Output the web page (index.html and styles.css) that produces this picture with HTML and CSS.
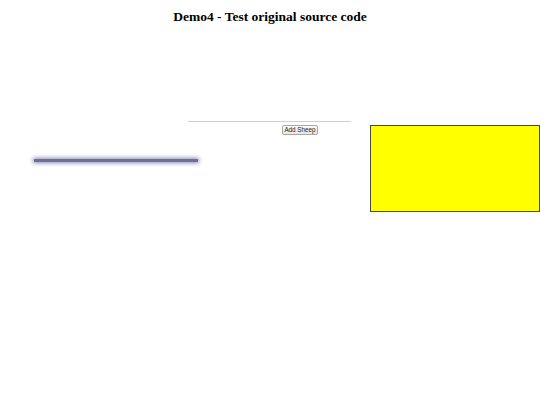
FILE: index.html
```html
<!DOCTYPE html>
<html>
<head>
<meta charset="utf-8">
<title>Demo4</title>
<link rel="stylesheet" href="styles.css">
</head>
<body>
<h1 class="title">Demo4 - Test original source code</h1>
<div class="stage">
  <div class="left">
    <div class="rule"></div>
    <button class="btn">Add Sheep</button>
    <div class="bar"></div>
  </div>
  <div class="box"></div>
</div>
</body>
</html>
```
FILE: styles.css
```css
html, body {
  margin: 0;
  padding: 0;
  background: #fff;
}
.title {
  margin: 8px 0 0 0;
  font-family: "Liberation Serif", serif;
  font-size: 13.5px;
  line-height: 18px;
  font-weight: bold;
  text-align: center;
  color: #000;
}
.stage {
  display: flex;
  margin-top: 95px;
}
.left {
  width: 370px;
  display: flex;
  flex-direction: column;
  align-items: flex-start;
}
.rule {
  margin-left: 188px;
  width: 163px;
  height: 1px;
  background: #cfcfcf;
}
.btn {
  margin: 3px 0 0 282px;
  width: 36px;
  height: 10px;
  padding: 0;
  border: 1px solid #a8a8a8;
  border-radius: 2px;
  background: linear-gradient(#fbfbfb, #e6e6e6);
  font-family: "Liberation Sans", Arial, sans-serif;
  font-size: 6.3px;
  line-height: 8px;
  color: #222;
}
.bar {
  margin: 24px 0 0 34px;
  width: 164px;
  height: 3px;
  background: #6e6e98;
  box-shadow: 0 0 4px 1px #8888b4;
}
.box {
  margin-top: 4px;
  width: 168px;
  height: 85px;
  background: #ffff00;
  border: 1px solid #4a4a3a;
}
```
